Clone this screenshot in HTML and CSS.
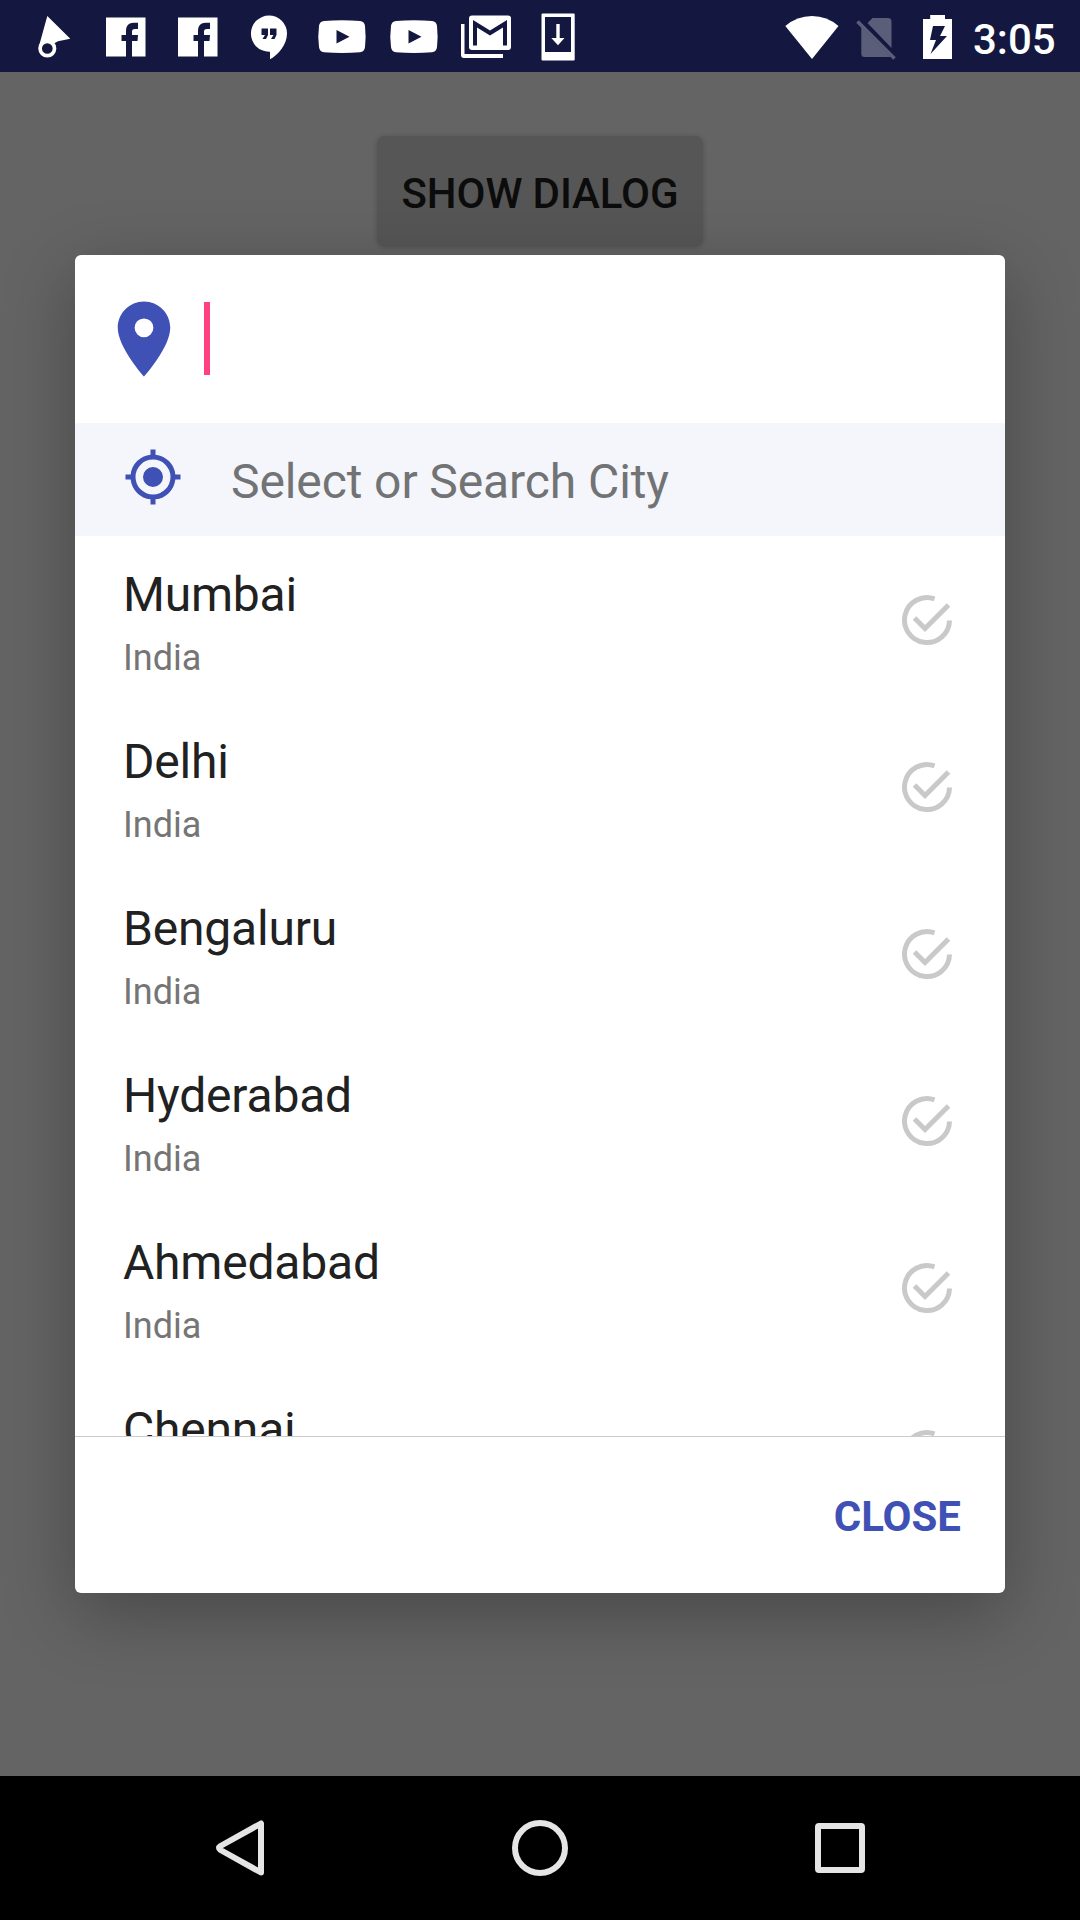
FILE: index.html
```html
<!DOCTYPE html>
<html lang="en">
<head>
<meta charset="utf-8">
<title>Select City</title>
<link rel="stylesheet" href="styles.css">
</head>
<body>
<svg class="defs" aria-hidden="true">
  <symbol id="facebook" viewBox="0 0 72 72"><path fill-rule="evenodd" d="M16 17.500h39.500v39H42V41h5.500l.5-6h-6v-3.500C42 30 42.800 29 45 29h3v-6.300h-4.500C39 22.700 36 25.500 36 31v4h-4.500v6H36v15.500H16z"/></symbol>
  <symbol id="youtube" viewBox="0 0 72 72"><path fill-rule="evenodd" d="M18 21Q36 19.400 54 21Q58.500 21.300 59 26Q60.200 36.500 59 47Q58.500 51.700 54 52.200Q36 53.600 18 52.200Q13.500 51.700 13 47Q11.600 36.500 13 26Q13.500 21.300 18 21zM30.500 30v13.500l13-6.800z"/></symbol>
  <symbol id="check" viewBox="0 0 52 52"><path fill="none" stroke="currentColor" stroke-width="5" d="M33.500 4.800A22.500 22.500 0 1 0 48.500 26.500M13.500 24L24 34.500L47.500 11"/></symbol>
</svg>
<div class="screen">
  <header class="status">
    <div class="notifications">
      <svg viewBox="0 0 72 72"><path d="M29.300 16L52.300 38.700L40 41.200L35 44L21 46z"/><circle class="ring" cx="29.300" cy="48.500" r="7.200"/></svg>
      <svg><use href="#facebook"/></svg>
      <svg><use href="#facebook"/></svg>
      <svg viewBox="0 0 72 72"><path fill-rule="evenodd" d="M35 15.500A18 18 0 0 1 53 33.500C53 45 44 55 36 59.300V51.700H35A18 18 0 0 1 35 15.500zM27.500 28.500v6.500h3.500l-2.500 4h3.500l2-4v-6.500zM36 28.500v6.500h3.500l-2.500 4h3.500l2-4v-6.500z"/></svg>
      <svg><use href="#youtube"/></svg>
      <svg><use href="#youtube"/></svg>
      <svg viewBox="0 0 72 72"><rect x="19" y="15.500" width="42" height="34.500" rx="3"/><path d="M11 24h3.500v30H53v4H14q-3 0-3-3z"/><path class="cut" d="M23 45.500V20l17 10.500L57 20v25.500h-4V27.500L40 35.500L27 27.500v18z"/></svg>
      <svg viewBox="0 0 72 72"><path fill-rule="evenodd" d="M20.500 13.500h31.200q1 0 1 1v45q0 1-1 1H20.500q-1 0-1-1v-45q0-1 1-1zM23 17v35h26V17z"/><path d="M34.300 24h3.400v14h4.800L36 45.300L29.300 38h5z"/></svg>
    </div>
    <div class="system">
      <svg class="wifi" viewBox="0 0 54 72"><path d="M.300 26Q12 16 27 16T53.500 26L27 59z"/></svg>
      <svg class="sim" viewBox="0 0 40 72"><path d="M16.500 18H32q3.500 0 3.500 3.500v26.500L11.500 23zM5.300 27L34.500 56.500l-1 .5H8.500Q5.300 57 5.300 53.500z"/><path class="slash" d="M1.500 21.500L38.500 58.500"/></svg>
      <svg class="battery" viewBox="0 0 29 72"><path fill-rule="evenodd" d="M7.200 15H22v4h7v40H0V19h7.200zM10 26L7 40h6L7.500 54L24 36h-7l5-10z"/></svg>
      <span class="time">3:05</span>
    </div>
  </header>
  <main class="content">
    <button class="show">SHOW DIALOG</button>
    <section class="dialog">
      <div class="search">
        <svg class="pin" viewBox="0 0 24 24"><path d="M12 2C8.130 2 5 5.130 5 9c0 5.250 7 13 7 13s7-7.750 7-13c0-3.870-3.130-7-7-7zm0 9.500a2.500 2.500 0 0 1 0-5 2.500 2.500 0 0 1 0 5z"/></svg>
        <span class="caret"></span>
      </div>
      <div class="banner">
        <svg class="locate" viewBox="0 0 24 24"><path d="M12 8a4 4 0 1 0 0 8 4 4 0 0 0 0-8zm8.940 3A8.994 8.994 0 0 0 13 3.060V1h-2v2.060A8.994 8.994 0 0 0 3.060 11H1v2h2.060A8.994 8.994 0 0 0 11 20.940V23h2v-2.060A8.994 8.994 0 0 0 20.940 13H23v-2zM12 19a7 7 0 1 1 0-14 7 7 0 0 1 0 14z"/></svg>
        <span>Select or Search City</span>
      </div>
      <ul class="cities">
        <li><div><h2>Mumbai</h2><p>India</p></div><svg class="check"><use href="#check"/></svg></li>
        <li><div><h2>Delhi</h2><p>India</p></div><svg class="check"><use href="#check"/></svg></li>
        <li><div><h2>Bengaluru</h2><p>India</p></div><svg class="check"><use href="#check"/></svg></li>
        <li><div><h2>Hyderabad</h2><p>India</p></div><svg class="check"><use href="#check"/></svg></li>
        <li><div><h2>Ahmedabad</h2><p>India</p></div><svg class="check"><use href="#check"/></svg></li>
        <li><div><h2>Chennai</h2></div><svg class="check"><use href="#check"/></svg></li>
      </ul>
      <footer class="actions"><button class="close">CLOSE</button></footer>
    </section>
  </main>
  <nav class="navbar">
    <svg class="back" viewBox="0 0 60 60"><path d="M48 5.500V54.500L7.500 32Q4.500 30 7.500 28z"/></svg>
    <svg viewBox="0 0 60 60"><circle cx="30" cy="30" r="25"/></svg>
    <svg viewBox="0 0 60 60"><rect x="8" y="8" width="44" height="44" rx="1"/></svg>
  </nav>
</div>
</body>
</html>
```
FILE: styles.css
```css
* { box-sizing: border-box; margin: 0; padding: 0; }
body { font-family: Roboto, sans-serif; background: #646464; }
button { border: 0; background: none; font-family: inherit; }
.defs { display: none; }
.screen { width: 1080px; height: 1920px; display: flex; flex-direction: column; overflow: hidden; }

.status { height: 72px; flex: none; background: #141840; color: #fff; display: flex; justify-content: space-between; padding: 0 23px 0 18px; }
.status svg { fill: currentColor; height: 72px; display: block; }
.notifications { display: flex; }
.notifications svg { width: 72px; }
.notifications .ring { fill: #141840; stroke: #fff; stroke-width: 3.700px; }
.notifications .cut { fill: #141840; }
.system { display: flex; }
.system .wifi { width: 54px; margin-right: 17px; }
.system .sim { width: 40px; margin-right: 27px; color: #5b5e79; }
.system .slash { stroke: currentColor; stroke-width: 3.500px; }
.system .battery { width: 29px; margin-right: 21px; }
.time { width: 84px; font-size: 42px; font-weight: 500; line-height: 50px; padding-top: 15px; white-space: nowrap; }

.content { flex: 1; min-height: 0; display: flex; flex-direction: column; align-items: center; padding-top: 64px; }
.show { width: 326px; height: 110px; flex: none; margin-bottom: 9px; padding-top: 5px; border-radius: 8px; background: #565656; color: #0c0c0c; font-size: 42px; font-weight: 500; line-height: 50px; letter-spacing: -.1px; white-space: nowrap; box-shadow: 0 1px 5px rgba(0, 0, 0, .22); }

.dialog { width: 930px; height: 1338px; flex: none; z-index: 1; display: flex; flex-direction: column; background: #fff; border-radius: 6px; overflow: hidden; box-shadow: 0 20px 72px rgba(0, 0, 0, .29); }
.search { height: 168px; flex: none; display: flex; align-items: flex-start; padding: 39px 24px 0; }
.pin { width: 90px; height: 90px; fill: #3f51b5; }
.caret { width: 6px; height: 73px; margin: 8px 0 0 15px; background: #ff4081; }
.banner { height: 113px; flex: none; display: flex; align-items: flex-start; padding: 24px 48px 0; background: #f5f6fb; color: #727375; font-size: 48px; line-height: 57px; letter-spacing: -.1px; }
.locate { width: 60px; height: 60px; margin-right: 48px; fill: #3f51b5; }
.banner span { margin-top: 6px; }

.cities { flex: 1; min-height: 0; overflow: hidden; list-style: none; }
.cities li { height: 167px; display: flex; justify-content: space-between; align-items: flex-start; padding: 30px 52px 0 48px; }
.cities h2 { font-size: 48px; line-height: 57px; font-weight: 400; letter-spacing: -.2px; color: #212121; }
.cities p { margin-top: 14px; font-size: 36px; line-height: 42px; color: #757575; }
.check { width: 52px; height: 52px; margin-top: 28px; color: #c9c9c9; }

.actions { height: 157px; flex: none; display: flex; justify-content: flex-end; align-items: center; padding: 4px 44px 0 0; border-top: 1px solid #ccc; }
.close { color: #3f51b5; font-size: 42px; font-weight: 700; line-height: 50px; }

.navbar { height: 144px; flex: none; display: flex; align-items: center; justify-content: space-between; padding: 0 210px; background: #000; }
.navbar svg { width: 60px; height: 60px; fill: none; stroke: #e5e5e5; stroke-width: 6px; stroke-linejoin: round; }
.navbar .back { margin: 0 -3px 0 3px; }
```
